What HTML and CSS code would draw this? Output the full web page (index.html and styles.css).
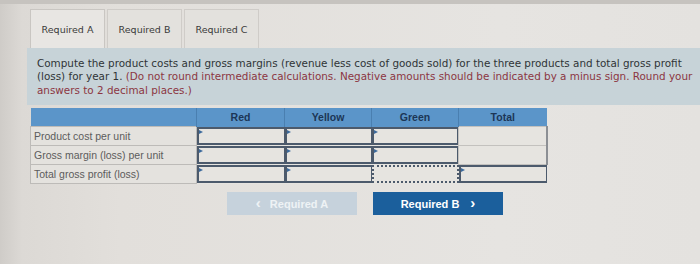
FILE: index.html
```html
<!DOCTYPE html>
<html>
<head>
<meta charset="utf-8">
<link rel="stylesheet" href="styles.css">
</head>
<body>
<div class="topbar"></div>
<div class="main">
  <div class="tabs">
    <div class="tab active">Required A</div>
    <div class="tab">Required B</div>
    <div class="tab">Required C</div>
  </div>
  <div class="instr">
    Compute the product costs and gross margins (revenue less cost of goods sold) for the three products and total gross profit (loss) for year 1. <span class="note">(Do not round intermediate calculations. Negative amounts should be indicated by a minus sign. Round your answers to 2 decimal places.)</span>
  </div>
  <table class="grid">
    <colgroup>
      <col class="c-lab">
      <col class="c-88">
      <col class="c-87">
      <col class="c-87">
      <col class="c-88">
    </colgroup>
    <thead>
      <tr>
        <th class="lab"></th>
        <th>Red</th>
        <th>Yellow</th>
        <th>Green</th>
        <th>Total</th>
      </tr>
    </thead>
    <tbody>
      <tr>
        <td class="lab">Product cost per unit</td>
        <td class="in"><span class="box"></span></td>
        <td class="in"><span class="box"></span></td>
        <td class="in"><span class="box"></span></td>
        <td class="plain"></td>
      </tr>
      <tr>
        <td class="lab">Gross margin (loss) per unit</td>
        <td class="in"><span class="box"></span></td>
        <td class="in"><span class="box"></span></td>
        <td class="in"><span class="box"></span></td>
        <td class="plain"></td>
      </tr>
      <tr>
        <td class="lab">Total gross profit (loss)</td>
        <td class="in"><span class="box"></span></td>
        <td class="in"><span class="box"></span></td>
        <td class="in"><span class="box dotted"></span></td>
        <td class="in"><span class="box"></span></td>
      </tr>
    </tbody>
  </table>
  <div class="nav">
    <div class="btn prev"><span class="chev">&#8249;</span>Required A</div>
    <div class="btn next">Required B<span class="chev r">&#8250;</span></div>
  </div>
</div>
</body>
</html>
```
FILE: styles.css
```css
html, body {
  margin: 0;
  padding: 0;
}
body {
  width: 700px;
  height: 264px;
  overflow: hidden;
  background: linear-gradient(90deg, #cfccc8 0px, #dcd9d5 22px, #e2dfdb 120px, #e6e4e1 500px, #e4e2df 700px);
  font-family: "DejaVu Sans", Verdana, sans-serif;
}
.topbar {
  height: 4px;
  background: #c6c3bf;
}
.main {
  padding-left: 27px;
}
.tabs {
  display: flex;
  gap: 2px;
  padding-left: 3px;
  margin-top: 5px;
}
.tab {
  box-sizing: border-box;
  width: 75px;
  height: 39px;
  border: 1px solid #cfccc8;
  border-bottom: none;
  display: flex;
  align-items: center;
  justify-content: center;
  font-size: 9.5px;
  color: #3a3a3a;
  background: #e3e1dd;
  padding-top: 1px;
}
.tab.active {
  background: #e8e6e3;
  border-color: #c9c6c2;
}
.instr {
  box-sizing: border-box;
  height: 57px;
  background: #c7d3d8;
  padding: 9px 2px 0 10px;
  font-size: 10.4px;
  line-height: 13.4px;
  color: #2f3336;
}
.note {
  color: #8c3642;
}
.grid {
  margin-top: 3px;
  margin-left: 3px;
  border-collapse: collapse;
  table-layout: fixed;
  width: 516px;
  font-family: "Liberation Sans", Arial, sans-serif;
}
.c-lab { width: 166px; }
.c-88 { width: 88px; }
.c-87 { width: 87px; }
.grid th {
  background: #5b95c9;
  height: 18px;
  padding: 0;
  font-size: 10.5px;
  font-weight: bold;
  color: #1c3656;
  border-left: 1px solid #4a7fb0;
  vertical-align: middle;
  line-height: 18px;
}
.grid th.lab {
  border-left: none;
}
.grid td {
  height: 18px;
  padding: 0;
  border: 1px solid #b7b5b2;
  background: #e6e4e0;
}
.grid td.lab {
  font-size: 10.5px;
  color: #5c5c5c;
  padding-left: 3px;
  border-color: #bdbbb8;
  background: #e4e2de;
  white-space: nowrap;
}
.grid td.in {
  border: none;
}
.box {
  display: block;
  box-sizing: border-box;
  height: 18px;
  border: 2px solid #4c5a6c;
  border-right-width: 1px;
  background: #e6e4e0;
  position: relative;
}
.box::before {
  content: "";
  position: absolute;
  left: 0;
  top: 1px;
  border-left: 4px solid #3c6a9c;
  border-top: 2.5px solid transparent;
  border-bottom: 2.5px solid transparent;
}
.box.dotted {
  border: 2px dotted #4c5a6c;
}
.box.dotted::before {
  display: none;
}
.grid td.plain {
  border: 1px solid #c3c1be;
  border-right: 2px solid #8c8f94;
}
.nav {
  display: flex;
  gap: 16px;
  margin-left: 200px;
  margin-top: 8px;
}
.btn {
  box-sizing: border-box;
  width: 130px;
  height: 23px;
  display: flex;
  align-items: center;
  justify-content: center;
  font-family: "Liberation Sans", Arial, sans-serif;
  font-size: 11px;
  font-weight: bold;
}
.chev {
  font-size: 15px;
  line-height: 1;
  margin-right: 9px;
  position: relative;
  top: -1px;
}
.chev.r {
  margin-right: 0;
  margin-left: 11px;
}
.btn.prev {
  background: #c6d2dc;
  color: #eef2f5;
}
.btn.next {
  background: #1b5f9c;
  color: #ffffff;
}
```
